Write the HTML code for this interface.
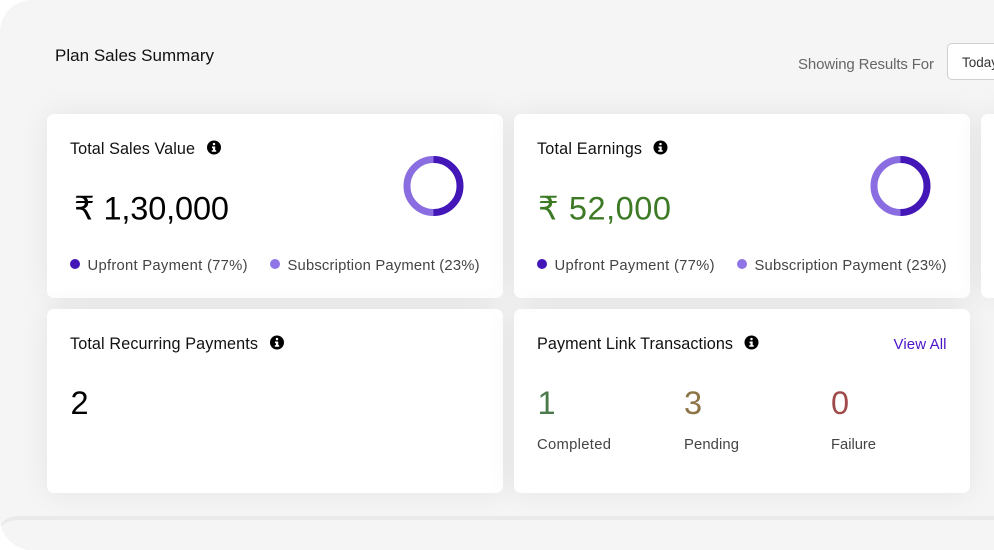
<!DOCTYPE html>
<html lang="en">
<head>
<meta charset="utf-8">
<title>Plan Sales Summary</title>
<style>
html,body{margin:0;padding:0;background:#fff;width:994px;height:550px;overflow:hidden}
#page{position:absolute;left:0;top:0;width:994px;height:550px;overflow:hidden;background:#f5f5f5;border-radius:32px 0 0 32px}
.card{position:absolute;background:#fff;border-radius:7px;box-shadow:0 0 30px rgba(0,0,0,.07)}
#sep{position:absolute;left:-4px;top:516px;width:1010px;height:60px;background:#f5f5f5;border-top:4px solid #eaeaea;border-radius:22px 0 0 0;box-sizing:border-box}
#btn{position:absolute;left:947px;top:43px;width:80px;height:37px;box-sizing:border-box;background:#fff;border:1px solid #cfcfcf;border-radius:5px}
svg{position:absolute;left:0;top:0}
text{font-family:"Liberation Sans",sans-serif;white-space:pre}
.h{font-size:16.200px;fill:#111}
.l{font-size:14.800px;fill:#444}
.b{font-size:32.500px;fill:#000}
</style>
</head>
<body>
<div id="page">
  <div id="sep"></div>
  <div class="card" style="left:46.500px;top:114px;width:456.500px;height:184px"></div>
  <div class="card" style="left:513.500px;top:114px;width:456.500px;height:184px"></div>
  <div class="card" style="left:980.500px;top:114px;width:60px;height:184px"></div>
  <div class="card" style="left:46.500px;top:308.500px;width:456.500px;height:184.500px"></div>
  <div class="card" style="left:513.500px;top:308.500px;width:456.500px;height:184.500px"></div>
  <div id="btn"></div>
  <svg width="994" height="550" viewBox="0 0 994 550" xmlns="http://www.w3.org/2000/svg">
    <defs>
      <g id="info">
        <circle cx="0" cy="0" r="7" fill="#000"/>
        <rect x="-1.200" y="-4.600" width="2.400" height="2.400" rx="1" fill="#fff"/>
        <path d="M-2-1H1.200V2.600H2.200V4.300H-2.200V2.600H-1V.7H-2Z" fill="#fff"/>
      </g>
    </defs>

    <text x="55" y="61" font-size="17" fill="#111" textLength="159" lengthAdjust="spacing">Plan Sales Summary</text>
    <text x="798" y="69" font-size="15" fill="#666" textLength="136" lengthAdjust="spacing">Showing Results For</text>
    <text x="962" y="67" font-size="13.500" fill="#333">Today</text>

    <!-- Card 1 -->
    <text class="h" x="70" y="154" textLength="125" lengthAdjust="spacing">Total Sales Value</text>
    <use href="#info" x="214" y="147.500"/>
    <text class="b" x="74" y="219.500" textLength="155" lengthAdjust="spacing">₹ 1,30,000</text>
    <circle cx="75" cy="264" r="5" fill="#4316b8"/>
    <text class="l" x="87.500" y="270" textLength="160" lengthAdjust="spacing">Upfront Payment (77%)</text>
    <circle cx="275" cy="264" r="5" fill="#8f75e6"/>
    <text class="l" x="287.500" y="270" textLength="192" lengthAdjust="spacing">Subscription Payment (23%)</text>
    <path d="M433.500 159.500A26.500 26.500 0 0 1 433.500 212.500" fill="none" stroke="#4316b8" stroke-width="7"/>
    <path d="M433.500 212.500A26.500 26.500 0 0 1 433.500 159.500" fill="none" stroke="#8a6de0" stroke-width="7"/>

    <!-- Card 2 -->
    <text class="h" x="537" y="154" textLength="105" lengthAdjust="spacing">Total Earnings</text>
    <use href="#info" x="660.500" y="147.500"/>
    <text x="538" y="219.500" font-size="32.500" fill="#3d7a25" textLength="133" lengthAdjust="spacing">₹ 52,000</text>
    <circle cx="542" cy="264" r="5" fill="#4316b8"/>
    <text class="l" x="554.500" y="270" textLength="160" lengthAdjust="spacing">Upfront Payment (77%)</text>
    <circle cx="742" cy="264" r="5" fill="#8f75e6"/>
    <text class="l" x="754.500" y="270" textLength="192" lengthAdjust="spacing">Subscription Payment (23%)</text>
    <path d="M900.500 159.500A26.500 26.500 0 0 1 900.500 212.500" fill="none" stroke="#4316b8" stroke-width="7"/>
    <path d="M900.500 212.500A26.500 26.500 0 0 1 900.500 159.500" fill="none" stroke="#8a6de0" stroke-width="7"/>

    <!-- Card 3 -->
    <text class="h" x="70" y="349" textLength="188" lengthAdjust="spacing">Total Recurring Payments</text>
    <use href="#info" x="277" y="342.500"/>
    <text class="b" x="70.500" y="414">2</text>

    <!-- Card 4 -->
    <text class="h" x="537" y="349" textLength="196" lengthAdjust="spacing">Payment Link Transactions</text>
    <use href="#info" x="751.500" y="342.500"/>
    <text x="893.500" y="349" font-size="15" fill="#4a14c8" textLength="53" lengthAdjust="spacing">View All</text>
    <text x="537.500" y="414" font-size="32.500" fill="#4b7a4b">1</text>
    <text x="684" y="414" font-size="32.500" fill="#8d7446">3</text>
    <text x="831" y="414" font-size="32.500" fill="#a04a4a">0</text>
    <text class="l" x="537" y="449" textLength="74" lengthAdjust="spacing">Completed</text>
    <text class="l" x="684" y="449" textLength="55" lengthAdjust="spacing">Pending</text>
    <text class="l" x="831" y="449" textLength="45" lengthAdjust="spacing">Failure</text>
  </svg>
</div>
</body>
</html>
